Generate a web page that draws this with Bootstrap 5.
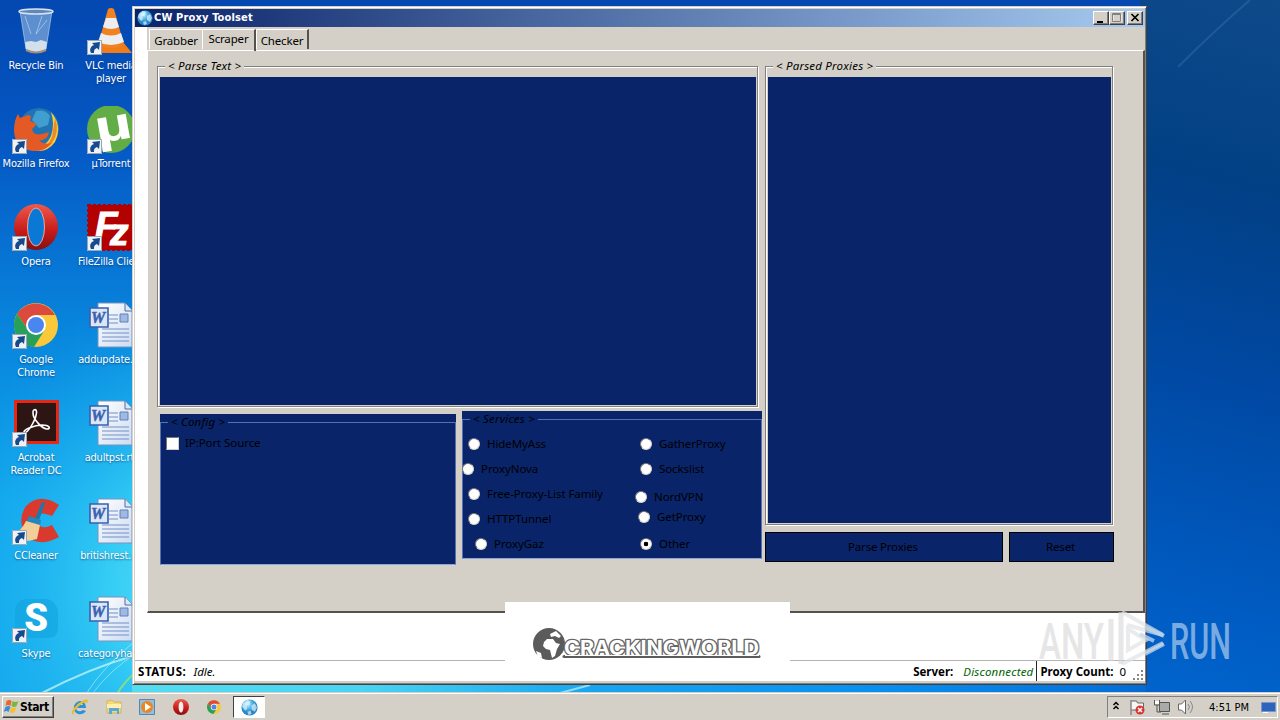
<!DOCTYPE html>
<html lang="en">
<head>
  <meta charset="UTF-8">
  <title>CW Proxy Toolset</title>
  <meta name="viewport" content="width=device-width, initial-scale=1">
  <link href="https://cdn.jsdelivr.net/npm/bootstrap@5.3.0/dist/css/bootstrap.min.css" rel="stylesheet">
  <style>
    body {
      width: 1280px;
      height: 720px;
      overflow: hidden;
      font: 11.5px/13px "Noto Sans", sans-serif;
      color: #000;
      background: #0463c8;
    }

    .wallpaper {
      z-index: 0;
    }

    /* Desktop icons */
    .desktop-icons {
      display: grid;
      grid-template-columns: 74px 76px;
      grid-template-rows: repeat(7, 98px);
      grid-auto-flow: column;
      position: relative;
      left: -1px;
      padding-top: 8px;
      height: 692px;
    }

    .desk-item {
      color: #fff;
      text-align: center;
      white-space: nowrap;
      font: 11px/13px "DejaVu Sans Condensed", "DejaVu Sans", sans-serif;
      letter-spacing: -0.2px;
      text-shadow: 0 1px 2px rgba(0, 30, 90, 0.6);
    }

    .desk-item svg {
      display: block;
      width: 48px;
      height: 48px;
      margin: 0 auto 3px;
      text-shadow: none;
    }

    /* Application window */
    .app-window {
      position: absolute;
      left: 132px;
      top: 6px;
      width: 1015px;
      height: 679px;
      background: #d4d0c8;
      border: 1px solid #d4d0c8;
      border-right-color: #404040;
      border-bottom-color: #404040;
      box-shadow: inset 1px 1px #fff, inset -1px -1px #808080;
      padding: 2px 1px 2px 2px;
    }

    .title-bar {
      height: 18px;
      background: linear-gradient(to right, #0a246a, #a6caf0);
      color: #fff;
      font: bold 11px/18px "DejaVu Sans Condensed", sans-serif;
      padding: 0 2px 0 2px;
    }

    .title-bar button {
      width: 16px;
      height: 14px;
    }

    .raised {
      background: #d4d0c8;
      border: 1px solid;
      border-color: #fff #404040 #404040 #fff;
      box-shadow: inset -1px -1px #808080;
      padding: 0;
    }

    .client {
      height: 633px;
      background: #fff;
      padding-left: 12px;
    }

    .tab-strip {
      height: 23px;
      background: #d4d0c8;
      padding: 2px 0 0 2px;
    }

    .tab-strip a {
      color: #000;
      text-decoration: none;
      letter-spacing: -0.15px;
      height: 20px;
      line-height: 21px;
      text-align: center;
      border: 1px solid #fff;
      border-bottom: 0;
      border-right: 2px solid #55514c;
      align-self: flex-end;
      margin-bottom: 1px;
    }

    .tab-strip a:first-child {
      border-right: 1px solid #fff;
    }

    .tab-strip a.current {
      height: 22px;
      line-height: 18px;
      margin-bottom: 0;
      align-self: stretch;
      border-left: 0;
    }

    .tab-page {
      height: 563px;
      background: #d4d0c8;
      border: 1px solid #fff;
      border-right: 2px solid #55514c;
      border-bottom: 2px solid #55514c;
      padding: 15px 0 0 9px;
    }

    .group-box {
      position: relative;
      border: 1px solid #808080;
      box-shadow: 1px 1px #fff, inset 1px 1px #fff;
      padding: 10px 1px 1px 2px;
    }

    .group-label {
      position: absolute;
      left: 7px;
      top: -8px;
      line-height: 14px;
      padding: 0 3px;
      background: #d4d0c8;
      font-style: italic;
      letter-spacing: 0.2px;
    }

    .navy {
      background: #0a246a;
    }

    .option-box {
      background: #0a246a;
      padding: 8px 0 0 0;
    }

    .option-frame {
      position: relative;
      height: 100%;
      border: 1px solid #5570b8;
      border-bottom: 1px solid #8fa3dc;
    }

    .option-frame .group-label {
      background: #0a246a;
    }

    .choice {
      display: flex;
      align-items: center;
      gap: 7px;
      height: 14px;
      line-height: 14px;
      white-space: nowrap;
      letter-spacing: -0.08px;
    }

    .choice input {
      appearance: none;
      width: 12px;
      height: 12px;
      margin: 0;
      border-radius: 50%;
      background: #fff;
      border: 1px solid;
      border-color: #777 #d4d0c8 #d4d0c8 #777;
    }

    .choice input:checked {
      background: radial-gradient(circle, #000 0 2px, #fff 2.6px);
    }

    .choice input[type=checkbox] {
      width: 13px;
      height: 13px;
      border-radius: 0;
    }

    .action-btn {
      height: 30px;
      border: 1px solid #000;
      background: #0a246a;
      color: #000;
      padding: 0 2px 1px 0;
      letter-spacing: -0.2px;
    }

    .status-line {
      height: 21px;
      background: #fff;
      border-top: 1px solid #b4b4b4;
      padding-left: 3px;
      line-height: 22px;
    }

    .brand-box {
      position: absolute;
      left: 372px;
      top: 595px;
      width: 285px;
      height: 79px;
      background: #fff;
    }

    /* Taskbar */
    .task-bar {
      position: absolute;
      left: 0;
      top: 692px;
      width: 1280px;
      height: 28px;
      background: #d4d0c8;
      box-shadow: inset 0 1px #d4d0c8, inset 0 2px #fff;
      padding: 4px 2px 2px 2px;
    }

    .start-btn {
      width: 52px;
      height: 22px;
      font: bold 12px/18px "DejaVu Sans Condensed", sans-serif;
      letter-spacing: -0.4px;
    }

    .tray {
      height: 22px;
      width: 171px;
      border: 1px solid;
      border-color: #808080 #fff #fff #808080;
    }

    .watermark {
      position: absolute;
      left: 1030px;
      top: 600px;
      overflow: visible;
      pointer-events: none;
    }
  </style>
</head>
<body>

<!-- Shared shapes -->
<svg width="0" height="0" class="position-absolute">
  <defs>
    <symbol id="shortcut" viewBox="0 0 15 15">
      <path d="M0 0h15v15H0z" fill="#edf2f7"/>
      <path d="M.5.5h14v14H.5z" fill="none" stroke="#9ba7b5"/>
      <path d="M4 13C2 9 4 6 7 5L5 3l8-1-1 8-2-2c-3 1-3 3-3 5z" fill="#174a8c"/>
    </symbol>
    <linearGradient id="paper" x1="0" y1="0" x2="1" y2="1"><stop stop-color="#fff"/><stop offset="1" stop-color="#cddcf2"/></linearGradient>
    <symbol id="worddoc" viewBox="0 0 48 48">
      <path d="M11 1h27l7 7v37H11z" fill="url(#paper)" stroke="#7b93bd"/>
      <path d="M38 1v8h7" fill="#dbe7f8" stroke="#536d9b"/>
      <path d="M22 13h9M22 17h9M22 21h9M15 27h27M15 31h27M15 35h27M15 39h27" stroke="#7390c5"/>
      <path d="M33 12h8v8h-8z" fill="#9fb9e4" stroke="#6380b5"/>
      <path d="M3 6h18v19H3z" fill="#dbe6f7" stroke="#3860ae" stroke-width="1.6"/>
      <text x="4" y="21" font-family="Liberation Serif" font-size="16" font-weight="bold" font-style="italic" fill="#3a62b0" stroke="#3a62b0" stroke-width=".5">W</text>
    </symbol>
    <radialGradient id="globefill" cx=".4" cy=".3"><stop stop-color="#d3f2ff"/><stop offset=".55" stop-color="#52b6e8"/><stop offset="1" stop-color="#2a86c4"/></radialGradient>
    <symbol id="globe" viewBox="0 0 16 16">
      <circle cx="8" cy="8" r="7.6" fill="url(#globefill)"/>
      <path d="M2 4l4-3 3 1-1 3-3 1 1 3-2 2-3-4zM10 6l3-2 2 4-2 4-3-2zM6 12l3-1 1 3-3 1z" fill="#edfaff" opacity=".65"/>
    </symbol>
    <symbol id="chrome" viewBox="0 0 44 44">
      <circle cx="22" cy="22" r="22" fill="#f9c83b"/>
      <path d="M3 11A22 22 0 0 1 41 12H22L13 25z" fill="#db4a3d"/>
      <path d="M3 11A22 22 0 0 0 20 44l10-16-8-3-9 0z" fill="#28a05b"/>
      <circle cx="22" cy="22" r="10" fill="#fff"/>
      <circle cx="22" cy="22" r="8" fill="#4a86ef"/>
    </symbol>
    <linearGradient id="opred" x1="0" y1="0" x2="0" y2="1"><stop stop-color="#ef5a4c"/><stop offset=".6" stop-color="#c51a19"/><stop offset="1" stop-color="#86100e"/></linearGradient>
  </defs>
</svg>

<!-- Wallpaper -->
<svg class="wallpaper position-absolute top-0 start-0" width="1280" height="720" viewBox="0 0 1280 720">
  <defs>
    <linearGradient id="skyLeft" x1="0" y1="0" x2="0" y2="1">
      <stop stop-color="#0447b0"/><stop offset=".2" stop-color="#0558c4"/><stop offset=".45" stop-color="#0884dc"/>
      <stop offset=".7" stop-color="#0fa4ec"/><stop offset="1" stop-color="#14a8ec"/>
    </linearGradient>
    <linearGradient id="skyRight" x1="1280" y1="0" x2="1090" y2="720" gradientUnits="userSpaceOnUse">
      <stop stop-color="#0e4a8a"/><stop offset=".25" stop-color="#024085"/><stop offset=".5" stop-color="#0048a2"/><stop offset=".85" stop-color="#005ec6"/><stop offset="1" stop-color="#0068d0"/>
    </linearGradient>
    <radialGradient id="glow" cx="230" cy="590" r="310" gradientUnits="userSpaceOnUse">
      <stop stop-color="#72eefa"/><stop offset=".4" stop-color="#3ad2f6" stop-opacity=".85"/><stop offset="1" stop-color="#12a6ee" stop-opacity="0"/>
    </radialGradient>
    <linearGradient id="lower" x1="130" x2="1280" y1="0" y2="0" gradientUnits="userSpaceOnUse">
      <stop stop-color="#55dcf0"/><stop offset=".2" stop-color="#4ad4f2"/><stop offset=".4" stop-color="#18a6f0"/><stop offset=".65" stop-color="#0890f0"/><stop offset=".85" stop-color="#0572dc"/><stop offset="1" stop-color="#0052b0"/>
    </linearGradient>
  </defs>
  <path d="M0 0h1140v720H0z" fill="url(#skyLeft)"/>
  <path d="M1140 0h140v720h-140z" fill="url(#skyRight)"/>
  <path d="M0 0h550v720H0z" fill="url(#glow)"/>
  <path d="M132 684h1014v9H132z" fill="url(#lower)"/>
  <path d="M40 694Q90 668 136 655" stroke="#c6f5fa" stroke-width="2" fill="none" opacity=".75"/>
  <path d="M86 694Q104 666 134 642M92 694Q112 668 136 654" stroke="#b8f0f8" fill="none" opacity=".6"/>
  <path d="M117 694Q124 682 136 672" stroke="#9be46a" stroke-width="2" fill="none" opacity=".8"/>
  <path d="M560 693l30-8" stroke="#8fdcfa" stroke-width="2"/>
  <path d="M1178 67Q1215 30 1250 0" stroke="#4b86bd" stroke-width="2" fill="none" opacity=".3"/>
</svg>

<!-- Desktop icons -->
<div class="desktop-icons">
  <div class="desk-item">
    <svg viewBox="0 0 48 48">
      <path d="M8 3l6 38q10 6 20 0l6-38z" fill="#8db4e0" opacity=".65"/>
      <path d="M13 34l1 8q9 5 20 0l1-8-6-2-5 2-5-1z" fill="#e9edf1" opacity=".85"/>
      <path d="M8 3l6 38q10 6 20 0l6-38M13 8l6 18M30 8l-6 18 11-14" fill="none" stroke="#c4daf0" opacity=".6"/>
      <ellipse cx="24" cy="3.5" rx="17" ry="2.5" fill="#6487b5" stroke="#d5e4f2" stroke-width="1.5"/>
      <path d="M14 42q10 5 20 0" fill="none" stroke="#a58e76" stroke-width="2"/>
    </svg>Recycle Bin
  </div>
  <div class="desk-item">
    <svg viewBox="0 0 48 48">
      <circle cx="27" cy="22" r="20" fill="#2173b4"/>
      <path d="M24 5q9-2 14 5l-2 9-9 3-7-8z" fill="#4fb2dc" opacity=".7"/>
      <path d="M39 6q12 14 4 30-9 12-22 8 14-4 18-14 4-12 0-24z" fill="#f7cf3c"/>
      <path d="M43 12q5 14-3 25-9 10-19 7 15-2 19-13z" fill="#ee8a26"/>
      <path d="M2 25Q2 14 6 8l2 4 8-3 3 1-1 5 7 3-5 5q1 7 10 5l7-2q-1 8-10 9 6 4 13 2-8 9-19 8Q3 43 2 25z" fill="#e35a25"/>
      <use href="#shortcut" x="0" y="33" width="15" height="15"/>
    </svg>Mozilla Firefox
  </div>
  <div class="desk-item">
    <svg viewBox="0 0 48 48">
      <ellipse cx="24" cy="23" rx="22" ry="23" fill="url(#opred)"/>
      <ellipse cx="24" cy="23" rx="8.5" ry="19" fill="#0a78d5" stroke="#f1a69a"/>
      <use href="#shortcut" x="0" y="32" width="15" height="15"/>
    </svg>Opera
  </div>
  <div class="desk-item">
    <svg viewBox="0 0 48 48">
      <use href="#chrome" x="2" y="1" width="44" height="44"/>
      <use href="#shortcut" x="0" y="32" width="15" height="15"/>
    </svg>Google<br>Chrome
  </div>
  <div class="desk-item">
    <svg viewBox="0 0 48 48">
      <path d="M2 0h45v44H2z" fill="#e52713"/>
      <path d="M5 3h39v38H5z" fill="#2d1513"/>
      <path d="M22 10c4-2 3 6-1 13-4 8-8 11-9 9s10-7 18-7 9 4 5 4-14-9-14-16q0-3 1-3z" fill="none" stroke="#fff" stroke-width="1.6"/>
      <use href="#shortcut" x="0" y="32" width="15" height="15"/>
    </svg>Acrobat<br>Reader DC
  </div>
  <div class="desk-item">
    <svg viewBox="0 0 48 48">
      <path d="M47 7Q28-6 14 8 4 23 15 38q12 12 32 1l-7-12q-12 6-15-4 0-12 15-5z" fill="#d93a2d"/>
      <path d="M30 4l3 1-7 20-4-2z" fill="#1d79ad"/>
      <path d="M17 18l12 4-1 6-14-4z" fill="#2387bb"/>
      <path d="M14 23l14 4-3 14-9 2-14-7q8-4 12-13z" fill="#f2ce98"/>
      <use href="#shortcut" x="0" y="32" width="15" height="15"/>
    </svg>CCleaner
  </div>
  <div class="desk-item">
    <svg viewBox="0 0 48 48">
      <path d="M13 3h22q11 3 11 15v15q-1 9-10 9H13Q3 40 3 30V14Q4 5 13 3z" fill="#0d9fdc" opacity=".5"/>
      <text x="24" y="35" text-anchor="middle" font-family="Roboto" font-weight="900" font-size="38" fill="#fff">S</text>
      <use href="#shortcut" x="0" y="32" width="15" height="15"/>
    </svg>Skype
  </div>
  <div class="desk-item">
    <svg viewBox="0 0 48 48">
      <path d="M12 34h24l9 11H3z" fill="#ef7c16"/>
      <path d="M21 1q3-2 6 0l10 36q-13 7-26 0z" fill="#f18221"/>
      <path d="M19 10h10l3 9q-8 4-16 0zM14 25q10 5 20 0l3 9q-13 6-26 0z" fill="#eceef0"/>
      <use href="#shortcut" x="0" y="32" width="15" height="15"/>
    </svg>VLC media<br>player
  </div>
  <div class="desk-item">
    <svg viewBox="0 0 48 48">
      <circle cx="24" cy="23" r="24" fill="#62ad45"/>
      <text x="8" y="35" transform="rotate(-10 24 24)" font-family="Liberation Sans" font-weight="bold" font-size="46" textLength="37" lengthAdjust="spacingAndGlyphs" fill="#fff">µ</text>
      <use href="#shortcut" x="0" y="33" width="15" height="15"/>
    </svg>µTorrent
  </div>
  <div class="desk-item">
    <svg viewBox="0 0 48 48">
      <path d="M1 1h46v45H1z" fill="#b30000" stroke="#b30000" stroke-width="2" stroke-dasharray="3 2"/>
      <text font-family="Liberation Sans" font-weight="bold" font-style="italic" font-size="37" fill="#fff" stroke="#fff"><tspan x="8" y="34">F</tspan><tspan x="23" y="41">z</tspan></text>
      <use href="#shortcut" x="0" y="32" width="15" height="15"/>
    </svg>FileZilla Client
  </div>
  <div class="desk-item"><svg><use href="#worddoc" width="48" height="48"/></svg>addupdate.rtf</div>
  <div class="desk-item"><svg><use href="#worddoc" width="48" height="48"/></svg>adultpst.rtf</div>
  <div class="desk-item"><svg><use href="#worddoc" width="48" height="48"/></svg>britishrest.rtf</div>
  <div class="desk-item"><svg><use href="#worddoc" width="48" height="48"/></svg>categoryhar...</div>
</div>

<!-- Window -->
<div class="app-window">
  <div class="title-bar d-flex align-items-center">
    <svg width="16" height="16" style="margin-right: 1px"><use href="#globe" width="16" height="16"/></svg>
    <span class="me-auto" style="letter-spacing: 0.15px">CW Proxy Toolset</span>
    <button class="raised d-flex" aria-label="Minimize"><svg width="14" height="12"><path d="M3 9h6v2H3z"/></svg></button>
    <button class="raised d-flex" aria-label="Maximize"><svg width="14" height="12"><path d="M3 2.500h8v7H3z" fill="none" stroke="#fff"/><path d="M2.500 1.500h8v8h-8zM3 2.500h8" fill="none" stroke="#808080"/></svg></button>
    <button class="raised d-flex" style="margin-left: 2px" aria-label="Close"><svg width="14" height="12"><path d="M3.500 2l7 7M10.500 2l-7 7" stroke="#000" stroke-width="1.7"/></svg></button>
  </div>

  <div class="client">
    <div class="tab-strip d-flex">
      <a href="#" style="width: 54px">Grabber</a>
      <a href="#" class="current" style="width: 53px">Scraper</a>
      <a href="#" style="width: 53px">Checker</a>
    </div>

    <div class="tab-page d-flex align-items-start">
      <div>
        <div class="group-box" style="width: 601px; height: 341px">
          <span class="group-label">&lt; Parse Text &gt;</span>
          <div class="navy h-100"></div>
        </div>
        <div class="d-flex align-items-start pt-1" style="width: 607px">
          <div class="option-box" style="width: 296px; height: 151px; margin: 3px 6px 0 3px">
            <div class="option-frame">
              <span class="group-label">&lt; Config &gt;</span>
              <label class="choice" style="margin: 13px 0 0 5px"><input type="checkbox"><span style="margin-left: -1px">IP:Port Source</span></label>
            </div>
          </div>
          <div class="option-box" style="width: 300px; height: 148px">
            <div class="option-frame d-flex">
              <span class="group-label">&lt; Services &gt;</span>
              <div class="d-flex flex-column" style="width: 172px; padding: 17px 0 0 5px; gap: 11px">
                <label class="choice"><input type="radio" name="svc"><span>HideMyAss</span></label>
                <label class="choice" style="margin-left: -6px"><input type="radio" name="svc"><span>ProxyNova</span></label>
                <label class="choice"><input type="radio" name="svc"><span>Free-Proxy-List Family</span></label>
                <label class="choice"><input type="radio" name="svc"><span>HTTPTunnel</span></label>
                <label class="choice" style="margin-left: 7px"><input type="radio" name="svc"><span>ProxyGaz</span></label>
              </div>
              <div class="d-flex flex-column" style="padding: 17px 0 0 5px">
                <label class="choice"><input type="radio" name="svc"><span>GatherProxy</span></label>
                <label class="choice" style="margin-top: 11px"><input type="radio" name="svc"><span>Sockslist</span></label>
                <label class="choice" style="margin: 14px 0 0 -5px"><input type="radio" name="svc"><span>NordVPN</span></label>
                <label class="choice" style="margin: 6px 0 0 -2px"><input type="radio" name="svc"><span>GetProxy</span></label>
                <label class="choice" style="margin-top: 13px"><input type="radio" name="svc" checked><span>Other</span></label>
              </div>
            </div>
          </div>
        </div>
      </div>

      <div>
        <div class="group-box" style="width: 348px; height: 459px; margin-left: 1px">
          <span class="group-label">&lt; Parsed Proxies &gt;</span>
          <div class="navy h-100"></div>
        </div>
        <div class="d-flex" style="gap: 6px; margin: 7px 0 0 1px">
          <button class="action-btn" style="width: 238px">Parse Proxies</button>
          <button class="action-btn" style="width: 105px">Reset</button>
        </div>
      </div>
    </div>
  </div>

  <div class="status-line d-flex">
    <b style="letter-spacing: 0.6px">STATUS:</b>
    <i class="me-auto" style="margin-left: 7px">Idle.</i>
    <b>Server:</b>
    <i style="margin-left: 10px; color: #006400; letter-spacing: 0.2px">Disconnected</i>
    <b class="border-start border-dark" style="margin-left: 3px; padding-left: 3px">Proxy Count:</b>
    <span style="margin: 0 6px 0 6px">0</span>
    <svg width="13" height="20"><path d="M9 9h2v2H9zM5 13h2v2H5zM9 13h2v2H9zM1 17h2v2H1zM5 17h2v2H5zM9 17h2v2H9z" fill="#8a8780"/></svg>
  </div>

  <div class="brand-box">
    <svg width="285" height="79" viewBox="505 602 285 79">
      <circle cx="549" cy="644" r="16" fill="#5b5b5b"/>
      <path d="M544 642l3-3 6 0 3 4 4 1-3 5-2 7-3 2-2-8-4-1-3-3zM550 634l6-3 5 5-2 2-4-2-4 1zM536 651l5 2 1 5-4-1z" fill="#fff"/>
      <path d="M564 656.500h195" stroke="#5b5b5b" stroke-width="3" stroke-linecap="round"/>
      <text x="564" y="654.500" textLength="195" lengthAdjust="spacingAndGlyphs" font-family="Inter" font-weight="700" font-size="20" fill="#fff" stroke="#666" stroke-width="2.600" stroke-linejoin="round" paint-order="stroke">CRACKINGWORLD</text>
      <path d="M565 655.500h194" stroke="#fff"/>
    </svg>
  </div>
</div>

<!-- Taskbar -->
<div class="task-bar d-flex align-items-center">
  <button class="raised start-btn d-flex align-items-center">
    <svg width="17" height="16" viewBox="0 0 16 16"><path d="M3 2q3-2 5 0L7 7Q4 5 2 7z" fill="#ef6529"/><path d="M9 2q3 2 6 0l-2 5q-2 2-5 0z" fill="#79b83e"/><path d="M2 8q3-2 5 0l-2 5q-2-2-5 0z" fill="#368dde"/><path d="M8 8q3 2 5 0l-2 5q-2 2-5 0z" fill="#f7bf2d"/></svg>
    <span>Start</span>
  </button>
  <svg width="18" height="18" viewBox="0 0 18 18" style="margin-left: 17px"><path d="M15 10H5q1 4 5 3l2-1 3 1q-3 4-8 3-5-2-4-8 2-5 7-5 5 1 5 7zM6 7h6q-1-3-3-2-2 0-3 2z" fill="#2d91d8"/><path d="M2 17q-4-3 5-11 7-6 10-4l-1 4q0-3-4-1Q3 11 2 17z" fill="#e9bb2d"/></svg>
  <svg width="18" height="18" viewBox="0 0 18 18" style="margin-left: 16px"><path d="M2 3l5-1 2 2h7v11H2z" fill="#f4d878" stroke="#c8a23e" stroke-width=".6"/><path d="M2 6h14v4H2z" fill="#fff0ae"/><path d="M4 16v-6h10v6h-2v-3H7v3z" fill="#59a8dc"/></svg>
  <svg width="18" height="18" viewBox="0 0 18 18" style="margin-left: 15px"><path d="M1.500 1.500h15v15h-15z" fill="#8fc0e2" stroke="#5686b4"/><circle cx="9" cy="9" r="6" fill="#ee8420"/><path d="M7 5l6 4-6 4z" fill="#fff"/></svg>
  <svg width="18" height="18" viewBox="0 0 18 18" style="margin-left: 16px"><circle cx="9" cy="9" r="8" fill="url(#opred)"/><ellipse cx="9" cy="9" rx="2.400" ry="5.500" fill="#eee"/></svg>
  <svg width="15" height="15" style="margin-left: 17px"><use href="#chrome" width="14" height="14"/></svg>
  <div class="bg-white d-flex align-items-center justify-content-center" style="width: 32px; height: 22px; margin-left: 11px; border: 1px solid; border-color: #404040 #fff #fff #404040">
    <svg width="17" height="17"><use href="#globe" width="17" height="17"/></svg>
  </div>
  <div class="tray d-flex align-items-center ms-auto">
    <svg width="169" height="20" viewBox="0 0 169 20">
      <path d="M5.500 8l2.500-2.500L10.500 8M5.500 12l2.500-2.500 2.500 2.500" fill="none" stroke="#000" stroke-width="1.500"/>
      <path d="M23 3v15M23.500 4h5l1 2h6v7h-12" fill="#f6f6f6" stroke="#666"/><circle cx="32" cy="13" r="4.500" fill="#d83632"/><path d="M30 11l4 4M34 11l-4 4" stroke="#fff" stroke-width="1.500"/>
      <path d="M51.500 5.500h10v9h-10z" fill="#aaa" stroke="#555"/><path d="M46.500 3v5h5V3M49 8v7h4M54 17h7" fill="none" stroke="#555"/><path d="M47 4h4v3h-4z" fill="#fff"/>
      <path d="M70.500 7h3l4-4v14l-4-4h-3z" fill="#fff" stroke="#666"/><path d="M80 7q3 3 0 6M82 4q5 6 0 12" fill="none" stroke="#888"/>
      <text x="101" y="14" font-family="DejaVu Sans Condensed" font-size="11" textLength="40">4:51 PM</text>
      <path d="M153.500 5.500h14v9h-14z" fill="#2d63bd" stroke="#7896c6"/><path d="M155 15h5v1h-5z" fill="#fff"/>
    </svg>
  </div>
</div>

<!-- Watermark -->
<svg class="watermark" width="210" height="80" viewBox="1030 600 210 80">
  <g font-family="Roboto" font-weight="500" font-size="50">
    <text x="1039" y="659" textLength="65" lengthAdjust="spacingAndGlyphs" fill="#dedede" opacity=".75">ANY</text>
    <text x="1170" y="659" textLength="61" lengthAdjust="spacingAndGlyphs" fill="#8fb9e8" opacity=".85">RUN</text>
  </g>
  <path d="M1111 619v42M1121 612v52" stroke="#d8d8d8" stroke-width="5" opacity=".6"/>
  <path d="M1122 612l41 23-36-10M1163 643l-41 21M1128 629l18 11-18 10z" fill="none" stroke="#dfe3e6" stroke-width="4" opacity=".7"/>
  <path d="M1145 627l19 9M1145 654l19-10M1140 634l14 7" stroke="#c3d8ee" stroke-width="4" opacity=".75"/>
</svg>

<script src="https://cdn.jsdelivr.net/npm/bootstrap@5.3.0/dist/js/bootstrap.bundle.min.js"></script>
</body>
</html>
